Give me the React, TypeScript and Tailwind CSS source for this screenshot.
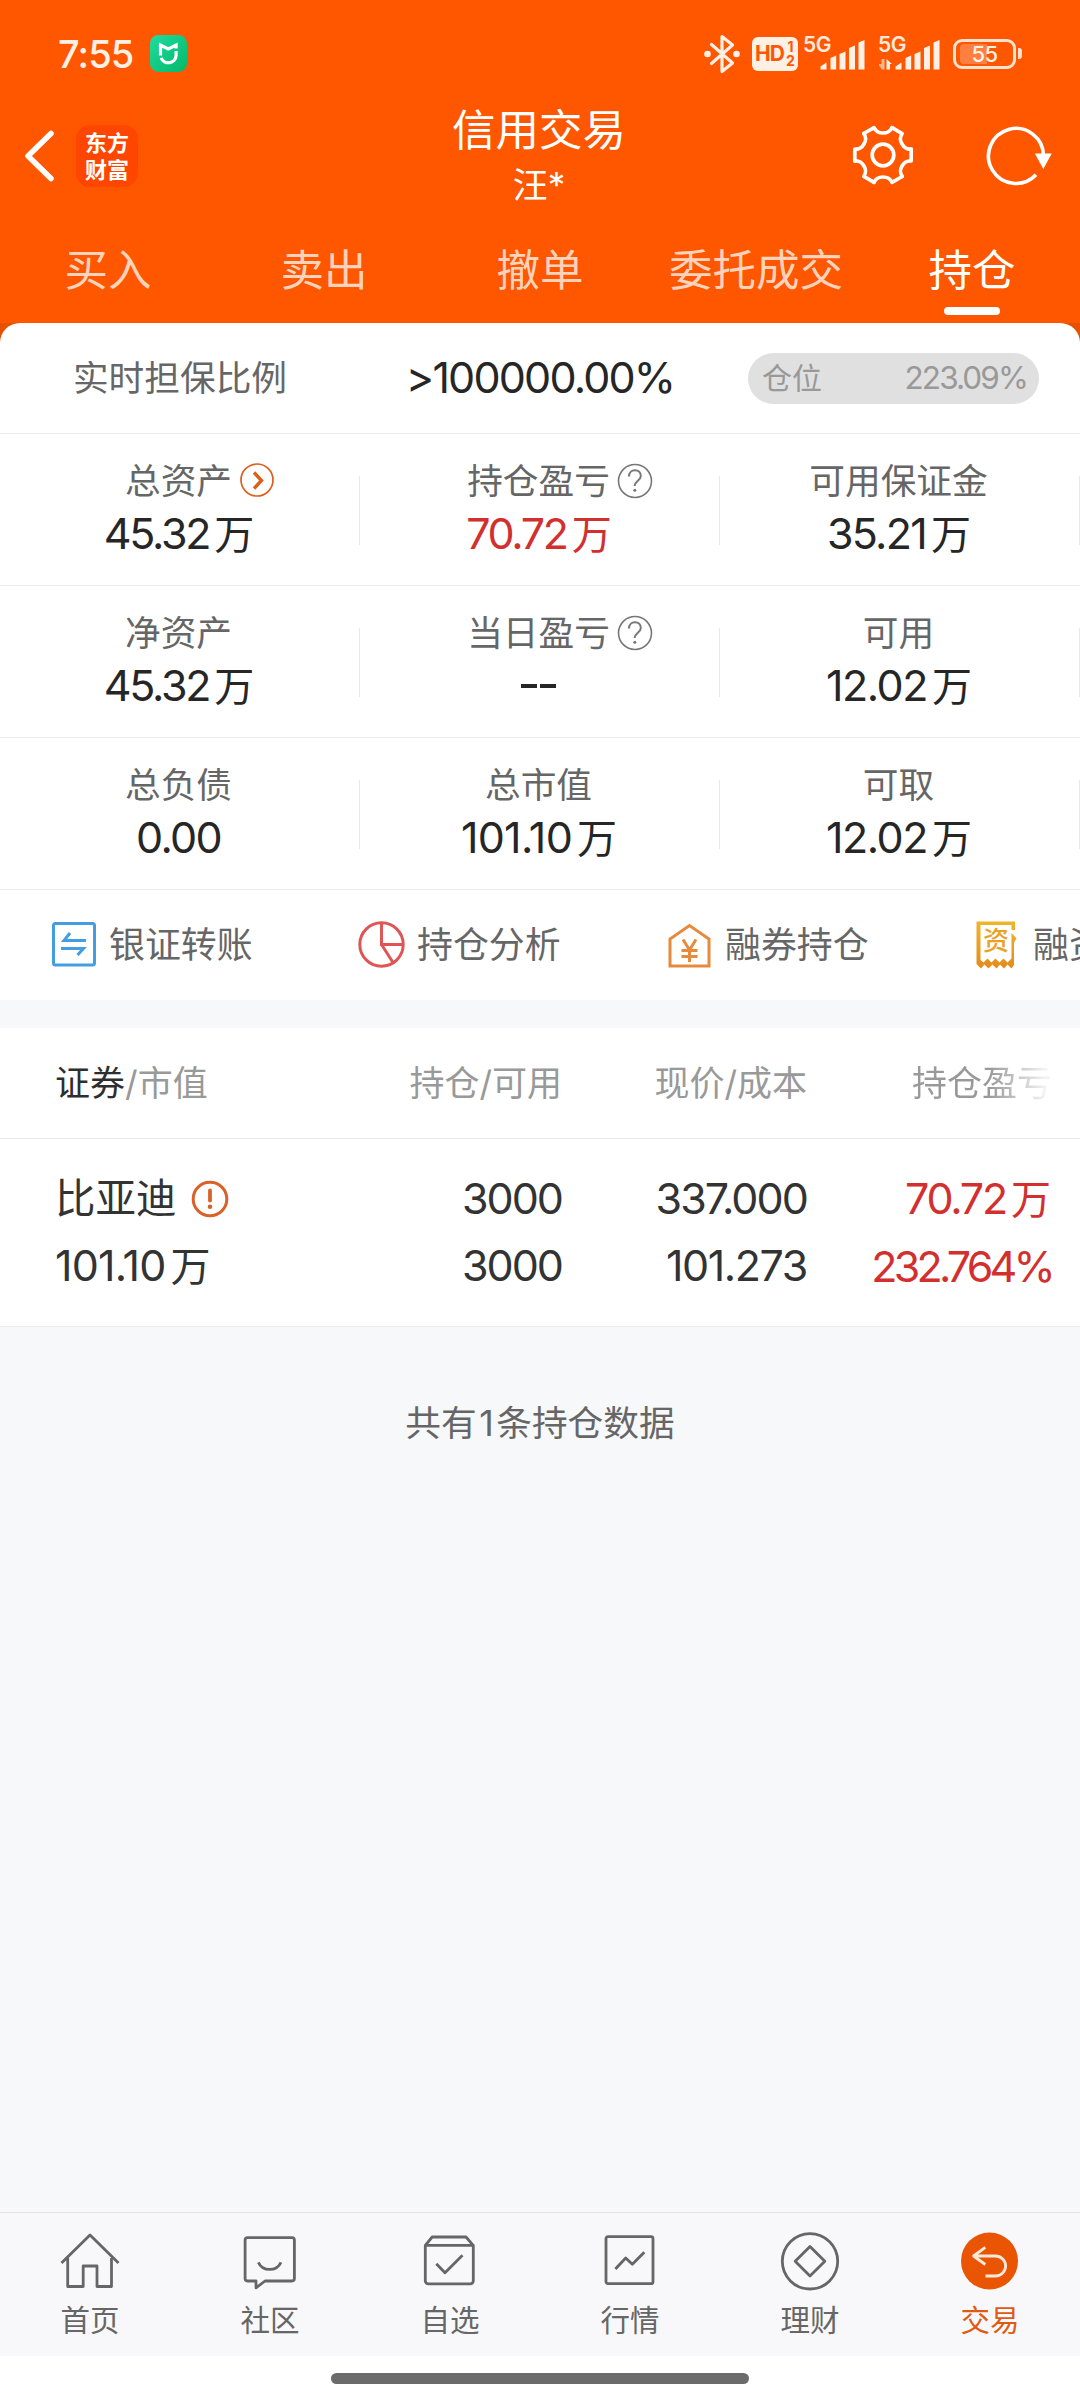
import React from 'react';

type Stat = {
  label: string;
  value: string;
  tone?: 'red';
  icon?: 'arrow' | 'help';
  track?: string;
};

const stats: Stat[][] = [
  [
    { label: '总资产', value: '45.32万', icon: 'arrow' },
    { label: '持仓盈亏', value: '70.72万', tone: 'red', icon: 'help' },
    { label: '可用保证金', value: '35.21万', track: 'tracking-[-1.700px]' },
  ],
  [
    { label: '净资产', value: '45.32万' },
    { label: '当日盈亏', value: '--', icon: 'help' },
    { label: '可用', value: '12.02万', track: 'tracking-[-1.500px]' },
  ],
  [
    { label: '总负债', value: '0.00', track: 'tracking-[-1.700px]' },
    { label: '总市值', value: '101.10万', track: 'tracking-[-0.700px]' },
    { label: '可取', value: '12.02万', track: 'tracking-[-1.500px]' },
  ],
];

/* Amount whose trailing 万 unit is set slightly smaller than the digits. */
function Amount({ v }: { v: string }) {
  if (!v.endsWith('万')) return <>{v}</>;
  return (
    <>
      {v.slice(0, -1)}
      <span className="ml-[5px] text-[40px] tracking-[-1px]">万</span>
    </>
  );
}

/* ---------- status bar ---------- */

function MiHomeIcon() {
  return (
    <svg width="37" height="37" viewBox="0 0 37 37" fill="none">
      <defs>
        <linearGradient id="mi" x1="0" y1="0" x2="1" y2="1">
          <stop offset="0" stopColor="#1fdca0" />
          <stop offset="1" stopColor="#04b868" />
        </linearGradient>
      </defs>
      <rect width="37" height="37" rx="8.5" fill="url(#mi)" />
      <path d="M10.500 20.500V10l7.800 4 7.800-4v3.500" stroke="#fff" strokeWidth="3.200" />
      <path d="M26.100 16v4.300a7.800 7.800 0 0 1-15 2.600" stroke="#fff" strokeWidth="3.200" />
    </svg>
  );
}

function BluetoothIcon() {
  return (
    <svg width="36" height="40" viewBox="0 0 36 40" fill="none" stroke="#fff0e6" strokeWidth="3.200" strokeLinejoin="round" strokeLinecap="round">
      <path d="M7.500 10.500 28.500 29 18 37.500V2.500l10.500 8.500L7.500 29.500" />
      <circle cx="3.500" cy="20" r="3.300" fill="#fff0e6" stroke="none" />
      <circle cx="32.500" cy="20" r="3.300" fill="#fff0e6" stroke="none" />
    </svg>
  );
}

function Signal({ active }: { active?: boolean }) {
  return (
    <div className="relative h-[34px] w-[62px]">
      <span className="absolute left-[-1px] top-0 font-[Inter] text-[21px] leading-[16px] font-semibold tracking-[-0.500px] text-[#ffe9dc]">5G</span>
      <svg className="absolute inset-0" width="62" height="34" viewBox="0 0 62 34" fill="#fff0e6">
        <path d="M16.500 32.500v-3l6-4v7zM26.500 32.500V21l5.700-2.500v14zM35.500 32.500V17l6-2.500v18zM45 32.500V11l6-2.500v24zM54.500 32.500V5.500l6-2.500v29.500z" />
        {active && (
          <g fill="#ffb48c">
            <path d="M5.500 22v10.500H3L-1 27h3.500v-5z" />
            <path d="M7.500 32.500V22l5.500 5H11v5.500z" fill="#fff0e6" />
          </g>
        )}
      </svg>
    </div>
  );
}

function Battery() {
  return (
    <div className="flex items-center">
      <div className="relative flex h-[30px] w-[63px] items-center justify-center rounded-[9px] border-[3px] border-[#ffe2d1]">
        <div className="absolute left-[4px] top-[2px] h-5 w-[27px] rounded-l-[4px] bg-[#ff7f40]" />
        <span className="relative font-[Inter] text-[22px] leading-none font-medium tracking-[-0.500px] text-[#fff0e6]">55</span>
      </div>
      <div className="ml-[2px] h-[11px] w-[4px] rounded-r-[3px] bg-[#ffe2d1]" />
    </div>
  );
}

function StatusBar() {
  return (
    <div className="flex h-[107px] items-center pl-[58px] pr-[58px]">
      <span className="font-[Inter] text-[38px] leading-none font-medium tracking-[-0.900px] text-[#fff0e6]">7:55</span>
      <div className="ml-[17px]"><MiHomeIcon /></div>
      <div className="ml-auto flex items-center">
        <BluetoothIcon />
        <div className="ml-3 flex h-[34px] w-[46px] items-center rounded-[6px] bg-[#fff0e6] pl-[3px] font-[Inter] font-bold text-[#ff5600]">
          <span className="w-[31px] text-[21px] leading-[22px] tracking-[-1px]">HD</span>
          <div className="flex flex-col text-center text-[14px] leading-[14px]">
            <span>1</span>
            <span>2</span>
          </div>
        </div>
        <div className="ml-[6px]"><Signal /></div>
        <div className="ml-[13px]"><Signal active /></div>
        <div className="ml-[12px]"><Battery /></div>
      </div>
    </div>
  );
}

/* ---------- header ---------- */

function GearIcon() {
  return (
    <svg width="64" height="64" viewBox="-32 -31 64 64" fill="none" stroke="#fff" strokeWidth="3.700" strokeLinejoin="round" strokeLinecap="round">
      {[0, 60, 120, 180, 240, 300].map((a) => (
        <path key={a} d="M9-27.300C6.500-22.300 3.500-22 0-22S-6.500-22.300-9-27.300L-19.200-21.500" transform={`rotate(${a})`} />
      ))}
      <circle r="10.800" />
    </svg>
  );
}

function RefreshIcon() {
  return (
    <svg width="70" height="64" viewBox="-30 -32 70 64" fill="none">
      <path d="M27.500 0A27.500 27.500 0 1 0 20 18.800" stroke="#fff" strokeWidth="3.600" />
      <path d="M18.800-2.500h17L27.300 13z" fill="#fff" />
    </svg>
  );
}

function Header() {
  return (
    <div className="flex h-[98px] items-center">
      <div className="flex w-[300px] items-center pl-[22px]">
        <svg width="36" height="56" viewBox="0 0 36 56" fill="none" stroke="#fff" strokeWidth="5.500" strokeLinecap="round" strokeLinejoin="round">
          <path d="M29 5.500 6 28l23 22.500" />
        </svg>
        <div className="ml-[18px] flex h-[62px] w-[62px] flex-col items-center justify-center rounded-[14px] bg-[#ff4600] pb-[2px] font-['Noto_Sans_CJK_SC'] text-[22px] leading-[27px] font-bold text-white">
          <span>东方</span>
          <span>财富</span>
        </div>
      </div>
      <div className="flex w-[478px] flex-col items-center text-white">
        <span className="text-[43.500px] leading-[52px]">信用交易</span>
        <span className="pt-[5px] text-[35px] leading-[48px]">汪*</span>
      </div>
      <div className="flex flex-1 items-center pl-[73px]">
        <GearIcon />
        <div className="ml-[71px]"><RefreshIcon /></div>
      </div>
    </div>
  );
}

function TopTabs() {
  const tabs = ['买入', '卖出', '撤单', '委托成交', '持仓'];
  return (
    <div className="grid h-[118px] grid-cols-5 text-[43.500px] leading-[60px]">
      {tabs.map((t, i) => (
        <div key={t} className="flex flex-col items-center pt-[35px]">
          <span className={i === 4 ? 'text-white' : 'text-[#ffd3bb]'}>{t}</span>
          {i === 4 && <div className="mt-[7px] h-2 w-[56px] rounded-full bg-white" />}
        </div>
      ))}
    </div>
  );
}

/* ---------- account summary ---------- */

function ArrowBadge() {
  return (
    <svg width="34" height="34" viewBox="0 0 34 34" fill="none" stroke="#dc5f1c">
      <circle cx="17" cy="17" r="16" strokeWidth="1.700" />
      <path d="M14 9.500 21.500 17.500 14 25.500" strokeWidth="3.400" />
    </svg>
  );
}

function HelpBadge() {
  return (
    <svg width="36" height="36" viewBox="0 0 36 36" fill="none" stroke="#777">
      <circle cx="18" cy="18" r="16.500" strokeWidth="1.600" />
      <path d="M12 13.500c0-4 2.600-6.200 6-6.200s5.800 2.200 5.800 5.600c0 4.600-6.200 5-6.200 10.100" strokeWidth="2" />
      <circle cx="17.800" cy="27.200" r="1.500" fill="#777" stroke="none" />
    </svg>
  );
}

function StatCell({ s }: { s: Stat }) {
  return (
    <div className="relative flex h-full flex-col items-center pr-[3px] pt-[23px]">
      <div className="relative text-[35.700px] leading-[48px] text-[#666]">
        {s.label}
        {s.icon && (
          <div className={`absolute left-full top-[6px] ${s.icon === 'arrow' ? 'pl-[8px]' : 'pl-[7px]'}`}>
            {s.icon === 'arrow' ? <ArrowBadge /> : <HelpBadge />}
          </div>
        )}
      </div>
      {s.value === '--' ? (
        <div className="flex h-[58px] items-center gap-[3px]">
          <div className="h-[3.500px] w-[16px] bg-[#262626]" />
          <div className="h-[3.500px] w-[16px] bg-[#262626]" />
        </div>
      ) : (
        <div className={`-mt-px text-[43px] leading-[58px] font-[375] ${s.tone === 'red' ? 'text-[#d2302f]' : 'text-[#262626]'} ${s.track ?? 'tracking-[-2.300px]'}`}>
          <Amount v={s.value} />
        </div>
      )}
      <div className="absolute right-0 top-[42px] h-[69px] w-px bg-[#e8e8e8]" />
    </div>
  );
}

function Summary() {
  return (
    <div className="rounded-t-[20px] bg-white">
      <div className="flex h-[110px] items-center">
        <div className="w-[360px] pb-[1px] text-center text-[35.700px] leading-[48px] text-[#666]">实时担保比例</div>
        <div className="w-[360px] pb-[3px] text-center text-[43px] leading-[58px] font-[375] tracking-[-1.800px] text-[#262626]">&gt;100000.00%</div>
        <div className="ml-[28px] flex h-[51px] w-[291px] items-center justify-between rounded-full bg-[#e0e0e0] pl-[14px] pr-[12px] text-[#999]">
          <span className="text-[30px] leading-none">仓位</span>
          <span className="text-[31.500px] leading-none font-[375] tracking-[-1.900px]">223.09%</span>
        </div>
      </div>
      {stats.map((row, i) => (
        <div key={i} className="grid h-[152px] grid-cols-3 border-t border-[#ebebeb]">
          {row.map((s) => <StatCell key={s.label} s={s} />)}
        </div>
      ))}
    </div>
  );
}

/* ---------- shortcuts ---------- */

const TransferIcon = (
  <svg width="48" height="48" viewBox="0 0 48 48" fill="none" stroke="#439de0" strokeWidth="3">
    <rect x="3.500" y="2.500" width="41" height="41.500" rx="2" />
    <path d="M36 19.500H14L20 12M11 27.500h22.500L27.500 34" />
  </svg>
);

const PieIcon = (
  <svg width="48" height="48" viewBox="0 0 48 48" fill="none" stroke="#df5555" strokeWidth="3">
    <circle cx="23.500" cy="23.500" r="21.700" />
    <path d="M23.500 2v21.500H45M23.500 23.500l11.500 18" />
  </svg>
);

const HouseYuanIcon = (
  <svg width="48" height="48" viewBox="0 0 48 48" fill="none" stroke="#e88a3c" strokeWidth="3">
    <path d="M4 45V18L23.500 4.500 43 18v27z" />
    <path d="M17 18.500 23.500 29 30 18.500M23.500 28.500V41M15.500 29.500h16M15.500 35.500h16" />
  </svg>
);

function ReceiptIcon() {
  return (
    <div className="relative h-12 w-12">
      <svg width="48" height="48" viewBox="-1.500 0 48 48" fill="none" className="absolute inset-0">
        <defs>
          <linearGradient id="rc" x1="0" y1="0" x2="0" y2="1">
            <stop offset="0" stopColor="#efb52c" />
            <stop offset="1" stopColor="#e38b1c" />
          </linearGradient>
        </defs>
        <path
          d="M1 .5h38.500V9H36V4H5v35l3 2.500 4-4 4 4 4-4 4 4 4-4 4 4 4-4V12l5 5.500-2.500 4V44l-2.500 3.500-4-4-3.500 4-4-4-3.500 4-4-4-4 4-4-4-3.500 4L1 43z"
          fill="url(#rc)"
        />
      </svg>
      <span className="absolute left-[9px] top-[6px] text-[26px] leading-[28px] font-medium text-[#e9a226]">资</span>
    </div>
  );
}

function Shortcuts() {
  const items = [
    { t: '银证转账', icon: TransferIcon },
    { t: '持仓分析', icon: PieIcon },
    { t: '融券持仓', icon: HouseYuanIcon },
    { t: '融资持仓', icon: <ReceiptIcon /> },
  ];
  return (
    <div className="flex h-[111px] overflow-hidden border-t border-[#ebebeb] bg-white pl-[50px]">
      {items.map((it) => (
        <div key={it.t} className="flex w-[308px] shrink-0 items-center">
          {it.icon}
          <span className="ml-[11px] pb-[1px] text-[35.900px] leading-[48px] whitespace-nowrap text-[#666]">{it.t}</span>
        </div>
      ))}
    </div>
  );
}

/* ---------- holdings ---------- */

function Holdings() {
  return (
    <div className="mt-7 bg-white">
      <div className="grid h-[110px] grid-cols-[262px_300px_245px_245px] items-center pb-px text-[35px] leading-[48px] text-[#999]">
        <div className="pl-[55px] whitespace-nowrap"><span className="text-[#2e2e2e]">证券</span>/市值</div>
        <div className="text-right">持仓/可用</div>
        <div className="text-right">现价/成本</div>
        <div className="text-right">
          <span className="bg-linear-to-r from-[#999] from-55% to-[#f3f3f3] to-95% bg-clip-text text-transparent">持仓盈亏</span>
        </div>
      </div>
      <div className="grid h-[189px] grid-cols-[262px_300px_245px_245px] border-y border-[#ebebeb] pt-[26px] text-right text-[43px] leading-[67px] font-[375] tracking-[-1.900px] text-[#333]">
        <div className="pl-[55px] text-left whitespace-nowrap">
          <div className="flex h-[67px] items-center pb-[1px] text-[40.500px] tracking-normal">
            比亚迪
            <svg className="mt-[2px] ml-[14px]" width="38" height="38" viewBox="0 0 38 38" fill="none" stroke="#d9622a">
              <circle cx="19" cy="19" r="16.800" strokeWidth="3" />
              <path d="M19 10.500v10" strokeWidth="3.800" strokeLinecap="round" />
              <circle cx="19" cy="26.700" r="2.300" fill="#d9622a" stroke="none" />
            </svg>
          </div>
          <div className="tracking-[-0.800px]"><Amount v="101.10万" /></div>
        </div>
        <div className="tracking-[-2px]"><div>3000</div><div>3000</div></div>
        <div><div>337.000</div><div className="tracking-[-1.400px]">101.273</div></div>
        <div className="text-[#d2302f]">
          <div className="pr-[2px] tracking-[-2.200px]"><Amount v="70.72万" /></div>
          <div className="tracking-[-3.800px]">232.764%</div>
        </div>
      </div>
      <div className="bg-[#f7f8fa] pt-[72px] text-center text-[35.700px] leading-[48px] text-[#666]">
        共有<span className="mx-[2.500px]">1</span>条持仓数据
      </div>
    </div>
  );
}

/* ---------- bottom bar ---------- */

const navItems = [
  { t: '首页', icon: <path d="M1.500 31 30 3l28.500 28M7.700 26v28.500h15.500V34H37v20.500h14.500V26" /> },
  { t: '社区', icon: <path d="M7.500 5.700h44.500a2.400 2.400 0 0 1 2.400 2.400v38.500A2.400 2.400 0 0 1 52 49H25l-9 6.800V49H7.500a2.400 2.400 0 0 1-2.400-2.400V8.100a2.400 2.400 0 0 1 2.400-2.400zM18.300 30.300c4.500 9.500 18.200 9.500 22.700 0" /> },
  { t: '自选', icon: <path d="M5.300 13.300 12.200 5H46l7.200 8.300M5.300 13.300h48v35.500a3 3 0 0 1-3 3h-42a3 3 0 0 1-3-3zM16.300 31.700l8.700 9 17.500-17.400" /> },
  { t: '行情', icon: <path d="M8 4.700h43a2 2 0 0 1 2 2v43a2 2 0 0 1-2 2H8a2 2 0 0 1-2-2v-43a2 2 0 0 1 2-2zM15.400 37l10.300-11 6.600 6.300 12-12" /> },
  { t: '理财', icon: <><circle cx="30" cy="29.300" r="27.700" /><path d="M30 14.500 44.800 29.300 30 44.100 15.200 29.300z" /></> },
  { t: '交易', icon: <><circle cx="29.500" cy="29" r="28.500" fill="#ea5504" stroke="none" /><path d="M25.300 15.300 13.500 24l11.800 8.500M14 24h21.600a10 10 0 0 1 0 20H25.500" stroke="#ffe9d8" /></> },
];

function BottomNav() {
  return (
    <div className="mt-auto">
      <div className="grid h-[144px] grid-cols-6 border-t border-[#e2e2e3] bg-[#f8f8fa]">
        {navItems.map((n, i) => (
          <div key={n.t} className="flex flex-col items-center pt-[19px]">
            <svg width="60" height="60" viewBox="0 0 60 60" fill="none" stroke="#666" strokeWidth="2.800" strokeLinejoin="round">
              {n.icon}
            </svg>
            <span className={`mt-[7px] text-[29.500px] leading-[42px] ${i === 5 ? 'text-[#df5a14]' : 'text-[#666]'}`}>{n.t}</span>
          </div>
        ))}
      </div>
      <div className="flex h-[44px] justify-center bg-white pt-[17px]">
        <div className="h-[11px] w-[418px] rounded-full bg-[#6b6b6b]" />
      </div>
    </div>
  );
}

export default function App() {
  return (
    <div className="flex h-[2400px] w-[1080px] flex-col overflow-hidden bg-[#f7f8fa] font-[Inter,'Noto_Sans_CJK_SC',sans-serif]">
      <div className="h-[323px] bg-[#ff5600]">
        <StatusBar />
        <Header />
        <TopTabs />
      </div>
      <div className="bg-[linear-gradient(#e65100_30px,#fff_30px)]">
        <Summary />
      </div>
      <Shortcuts />
      <Holdings />
      <BottomNav />
    </div>
  );
}
